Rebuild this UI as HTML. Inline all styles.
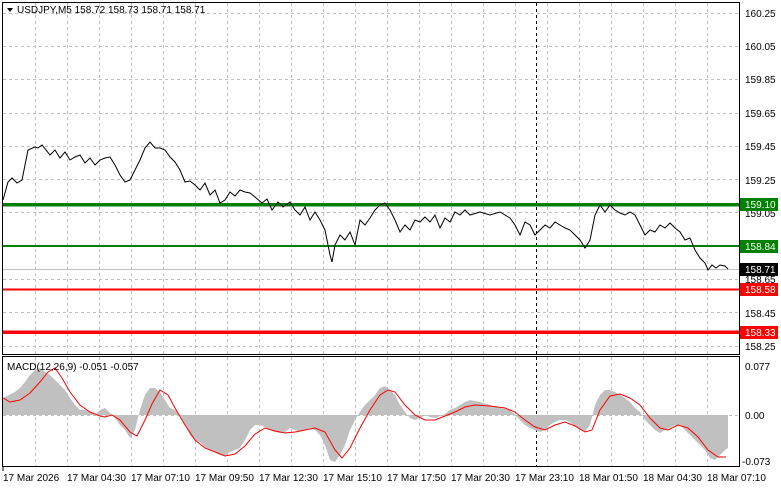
<!DOCTYPE html>
<html><head><meta charset="utf-8"><style>
body{margin:0;width:781px;height:489px;background:#fff;overflow:hidden;font-family:"Liberation Sans",sans-serif;}
svg{display:block}
text{font-family:"Liberation Sans",sans-serif;font-size:10px;fill:#000}
</style></head><body>
<svg width="781" height="489" viewBox="0 0 781 489">
<g stroke="#c0c0c0" stroke-dasharray="3,3" stroke-width="1">
<line x1="35.5" y1="3" x2="35.5" y2="466"/><line x1="67.5" y1="3" x2="67.5" y2="466"/><line x1="99.5" y1="3" x2="99.5" y2="466"/><line x1="131.5" y1="3" x2="131.5" y2="466"/><line x1="163.5" y1="3" x2="163.5" y2="466"/><line x1="195.5" y1="3" x2="195.5" y2="466"/><line x1="227.5" y1="3" x2="227.5" y2="466"/><line x1="259.5" y1="3" x2="259.5" y2="466"/><line x1="291.5" y1="3" x2="291.5" y2="466"/><line x1="323.5" y1="3" x2="323.5" y2="466"/><line x1="355.5" y1="3" x2="355.5" y2="466"/><line x1="387.5" y1="3" x2="387.5" y2="466"/><line x1="419.5" y1="3" x2="419.5" y2="466"/><line x1="451.5" y1="3" x2="451.5" y2="466"/><line x1="483.5" y1="3" x2="483.5" y2="466"/><line x1="515.5" y1="3" x2="515.5" y2="466"/><line x1="547.5" y1="3" x2="547.5" y2="466"/><line x1="579.5" y1="3" x2="579.5" y2="466"/><line x1="611.5" y1="3" x2="611.5" y2="466"/><line x1="643.5" y1="3" x2="643.5" y2="466"/><line x1="675.5" y1="3" x2="675.5" y2="466"/><line x1="707.5" y1="3" x2="707.5" y2="466"/>
<line x1="3" y1="13.5" x2="739" y2="13.5"/><line x1="3" y1="46.5" x2="739" y2="46.5"/><line x1="3" y1="79.5" x2="739" y2="79.5"/><line x1="3" y1="113.5" x2="739" y2="113.5"/><line x1="3" y1="146.5" x2="739" y2="146.5"/><line x1="3" y1="179.5" x2="739" y2="179.5"/><line x1="3" y1="212.5" x2="739" y2="212.5"/><line x1="3" y1="246.5" x2="739" y2="246.5"/><line x1="3" y1="279.5" x2="739" y2="279.5"/><line x1="3" y1="312.5" x2="739" y2="312.5"/><line x1="3" y1="346.5" x2="739" y2="346.5"/>
<line x1="3" y1="415.5" x2="739" y2="415.5"/>
</g>
<line x1="536.5" y1="3" x2="536.5" y2="466" stroke="#000" stroke-dasharray="3,3"/>
<line x1="3" y1="269.5" x2="739" y2="269.5" stroke="#c0c0c0"/>
<rect x="3" y="203" width="737" height="3.5" fill="#008000"/>
<rect x="3" y="245" width="737" height="2" fill="#008000"/>
<rect x="3" y="288.5" width="737" height="2" fill="#ff0000"/>
<rect x="3" y="330.5" width="737" height="3.5" fill="#ff0000"/>
<polyline fill="none" stroke="#000" stroke-width="1" points="3,200 8,182 12,178 17,183 22,180 28,150 35,147 38,148 42,145 50,155 55,150 60,158 65,152 70,160 75,157 80,155 85,163 90,158 95,165 100,160 105,158 110,157 115,165 120,175 125,182 130,180 135,170 140,160 145,148 150,142 155,148 160,148 165,150 170,157 175,162 180,170 185,182 190,181 195,185 200,190 205,183 210,195 215,190 220,203 225,200 230,192 235,196 240,190 245,192 250,193 255,197 262,203 267,199 272,210 278,202 283,207 290,202 295,210 300,215 305,207 310,220 315,212 320,220 325,230 330,255 332,262 335,245 340,235 345,240 350,232 355,245 360,220 365,225 370,218 375,210 380,205 385,203 390,210 395,220 400,232 405,225 410,230 415,220 420,222 425,217 430,222 435,215 440,228 445,218 450,222 455,212 460,215 465,210 470,215 480,212 490,215 500,212 510,218 515,225 520,235 525,222 530,225 535,235 540,230 545,225 550,228 555,222 560,225 565,228 570,230 575,235 580,240 585,248 590,240 595,215 600,205 605,212 610,205 615,210 620,213 625,215 630,212 635,215 640,225 645,235 650,230 655,232 660,225 665,228 670,223 675,228 680,232 685,240 690,238 695,250 700,258 705,263 708,270 712,265 716,268 720,265 725,266 728,269"/>
<polygon fill="#c0c0c0" points="3,415 3,398 15,392 20,388 25,382 30,375 35,370 40,368 45,372 50,375 55,380 60,385 65,390 70,398 75,405 80,410 85,410 90,412 95,415 100,410 105,408 110,413 115,418 120,425 125,430 130,438 135,430 140,410 145,395 150,388 155,388 160,392 165,400 170,408 175,410 180,415 185,425 190,435 195,440 200,442 205,447 210,450 215,452 220,455 225,456 230,452 235,450 240,448 245,440 250,430 255,425 260,425 265,427 270,430 275,432 280,433 285,432 290,428 295,430 300,432 305,430 310,428 315,430 320,435 325,445 330,460 335,462 340,455 345,445 350,430 355,420 360,412 365,405 370,400 375,395 380,388 385,386 390,390 395,395 400,405 405,412 410,418 415,420 420,418 425,415 430,417 435,418 440,416 445,414 450,410 455,408 460,405 465,402 470,400 480,402 490,405 500,408 510,410 515,415 520,420 525,425 530,428 535,430 540,432 545,430 550,425 555,422 560,420 565,420 570,422 575,426 580,430 585,432 590,425 595,405 600,395 605,390 610,390 615,392 620,395 625,398 630,402 635,408 640,412 645,420 650,425 655,430 660,433 665,430 670,428 675,425 680,425 685,430 690,435 695,440 700,445 705,450 710,458 715,460 720,455 725,450 728,448 728,415"/>
<polyline fill="none" stroke="#ff0000" stroke-width="1" points="3,398 10,402 20,400 30,393 40,382 48,372 55,368 62,378 70,392 80,405 90,412 100,416 105,417 112,415 120,420 130,432 137,436 145,420 152,404 160,390 168,395 175,408 185,425 195,440 205,448 215,452 225,456 235,454 245,446 255,434 265,428 275,431 285,433 295,432 305,430 315,428 325,432 335,450 342,458 350,448 360,428 370,410 380,395 388,390 395,392 405,405 415,415 425,420 435,420 445,416 455,412 465,407 475,405 490,406 505,408 515,412 525,420 535,427 545,430 555,425 565,422 575,426 585,432 592,430 600,410 610,396 620,394 630,398 640,405 650,418 660,428 668,430 678,425 688,428 698,437 708,450 718,457 726,457"/>
<g fill="none" stroke="#000" stroke-width="1">
<rect x="2.5" y="2.5" width="737" height="352"/>
<rect x="2.5" y="356.5" width="737" height="110"/>
</g>
<path d="M7,8 L13,8 L10,12 Z" fill="#000"/>
<text x="17" y="13" font-size="10">USDJPY,M5  158.72 158.73 158.71 158.71</text>
<text x="7" y="370">MACD(12,26,9) -0.051 -0.057</text>
<g>
<text x="745" y="17">160.25</text><text x="745" y="50">160.05</text><text x="745" y="83">159.85</text><text x="745" y="117">159.65</text><text x="745" y="150">159.45</text><text x="745" y="184">159.25</text><text x="745" y="217">159.05</text><text x="745" y="283">158.65</text><text x="745" y="317">158.45</text><text x="745" y="350">158.25</text>
<rect x="740" y="198" width="38" height="13" fill="#008000"/><text x="745" y="208" style="fill:#fff">159.10</text>
<rect x="740" y="240" width="38" height="13" fill="#008000"/><text x="745" y="250" style="fill:#fff">158.84</text>
<rect x="740" y="263" width="38" height="13" fill="#000"/><text x="745" y="273" style="fill:#fff">158.71</text>
<rect x="740" y="283" width="38" height="13" fill="#ff0000"/><text x="745" y="293" style="fill:#fff">158.58</text>
<rect x="740" y="326" width="38" height="13" fill="#ff0000"/><text x="745" y="336" style="fill:#fff">158.33</text>
<text x="745" y="370">0.077</text><text x="745" y="419">0.00</text><text x="742" y="465">-0.073</text>
</g>
<g>
<line x1="3" y1="467" x2="3" y2="471" stroke="#000"/>
<text x="3" y="481">17 Mar 2026</text><text x="67" y="481">17 Mar 04:30</text><text x="131" y="481">17 Mar 07:10</text><text x="195" y="481">17 Mar 09:50</text><text x="259" y="481">17 Mar 12:30</text><text x="323" y="481">17 Mar 15:10</text><text x="387" y="481">17 Mar 17:50</text><text x="451" y="481">17 Mar 20:30</text><text x="515" y="481">17 Mar 23:10</text><text x="579" y="481">18 Mar 01:50</text><text x="643" y="481">18 Mar 04:30</text><text x="707" y="481">18 Mar 07:10</text>
</g>
</svg>
</body></html>
